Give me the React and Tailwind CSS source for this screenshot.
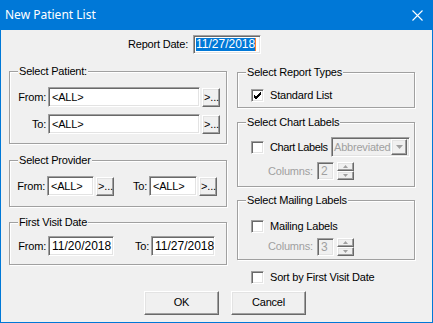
import React from "react";

const sunken =
  "border border-t-[#a0a0a0] border-l-[#a0a0a0] border-b-white border-r-white shadow-[inset_1px_1px_0_#696969,inset_-1px_-1px_0_#e3e3e3]";
const raised =
  "border border-t-white border-l-white border-b-[#696969] border-r-[#696969] shadow-[inset_-1px_-1px_0_#a0a0a0,inset_1px_1px_0_#e3e3e3] bg-[#f0f0f0]";

function Group({ title, className = "", children }) {
  return (
    <div
      className={`relative border border-[#a0a0a0] shadow-[inset_1px_1px_0_#fff,1px_1px_0_#fff] ${className}`}
    >
      <span className="absolute left-[8px] -top-[7px] bg-[#f0f0f0] px-[1px] leading-[13px] whitespace-nowrap">
        {title}
      </span>
      {children}
    </div>
  );
}

function TextBox({ value, className = "", disabled }) {
  return (
    <div
      className={`${sunken} ${disabled ? "bg-[#f0f0f0] text-[#a0a0a0]" : "bg-white"} flex items-center pl-[3px] leading-none whitespace-nowrap overflow-hidden ${className}`}
    >
      {value}
    </div>
  );
}

function Browse({ className = "" }) {
  return (
    <div className={`${raised} flex items-center justify-center w-[18px] h-[19px] leading-none pl-px ${className}`}>
      &gt;...
    </div>
  );
}

function Check({ checked }) {
  return (
    <div className={`${sunken} bg-white w-[13px] h-[13px] shrink-0 flex items-center justify-center`}>
      {checked && (
        <svg width="9" height="9" viewBox="0 0 9 9">
          <path d="M1 4 L3 6 L8 1 M1 5 L3 7 L8 2 M1 6 L3 8 L8 3" stroke="#000" strokeWidth="1" fill="none" />
        </svg>
      )}
    </div>
  );
}

function Spinner({ className = "" }) {
  return (
    <div className={`flex flex-col w-[17px] h-[18px] ${className}`}>
      <div className={`${raised} flex-1 flex items-center justify-center`}>
        <svg width="5" height="3" viewBox="0 0 5 3">
          <path d="M2.5 0 L5 3 L0 3 Z" fill="#a0a0a0" />
        </svg>
      </div>
      <div className={`${raised} flex-1 flex items-center justify-center`}>
        <svg width="5" height="3" viewBox="0 0 5 3">
          <path d="M0 0 L5 0 L2.5 3 Z" fill="#a0a0a0" />
        </svg>
      </div>
    </div>
  );
}

function ColumnsRow({ value, className = "" }) {
  return (
    <div className={`flex items-center pl-[30px] ${className}`}>
      <span className="w-[47px] text-[#a0a0a0]">Columns:</span>
      <TextBox value={value} disabled className="ml-[2px] w-[17px] h-[18px] pl-[2px] text-[12px]" />
      <Spinner className="ml-[3px]" />
    </div>
  );
}

export default function App() {
  return (
    <div
      className="w-[433px] h-[323px] flex flex-col bg-[#0078d7] text-[11px] tracking-[-0.2px] text-black"
      style={{ fontFamily: '"Liberation Sans", Arial, sans-serif' }}
    >
      {/* title bar */}
      <div className="h-[30px] shrink-0 flex items-center justify-between pl-[5px] pr-[10px] text-white">
        <span className="text-[12px] tracking-normal" style={{ fontFamily: '"Noto Sans", sans-serif' }}>
          New Patient List
        </span>
        <svg width="11" height="11" viewBox="0 0 11 11">
          <path d="M0.5 0.5 L10.5 10.5 M10.5 0.5 L0.5 10.5" stroke="#fff" strokeWidth="1.1" />
        </svg>
      </div>

      {/* body */}
      <div className="flex-1 mx-px mb-px bg-[#f0f0f0] flex flex-col">
        <div className="mt-[5px] flex items-center">
          <span className="w-[189px] text-right pr-[2px]">Report Date:</span>
          <div className={`${sunken} bg-white ml-[3px] w-[68px] h-[19px] flex items-center pl-[2px]`}>
            <span className="bg-[#0078d7] text-white leading-[13px] text-[12px] tracking-normal">11/27/2018</span>
            <span className="w-px h-[13px] bg-[#ff7f27]" />
          </div>
        </div>

        <div className="mt-[17px] flex pl-[8px]">
          {/* left column */}
          <div className="w-[218px] flex flex-col">
            <Group title="Select Patient:" className="h-[73px] pt-[15px] flex flex-col gap-[7px]">
              <div className="flex items-center">
                <span className="w-[36px] text-right">From:</span>
                <TextBox value="<ALL>" className="ml-[2px] w-[152px] h-[20px]" />
                <Browse className="ml-[2px]" />
              </div>
              <div className="flex items-center">
                <span className="w-[36px] text-right">To:</span>
                <TextBox value="<ALL>" className="ml-[2px] w-[152px] h-[20px]" />
                <Browse className="ml-[2px]" />
              </div>
            </Group>

            <Group title="Select Provider" className="mt-[16px] h-[47px] pt-[15px]">
              <div className="flex items-center">
                <span className="w-[35px] text-right">From:</span>
                <TextBox value="<ALL>" className="ml-[2px] w-[47px] h-[20px]" />
                <Browse className="ml-[2px]" />
                <span className="w-[33px] text-right">To:</span>
                <TextBox value="<ALL>" className="ml-[2px] w-[48px] h-[20px]" />
                <Browse className="ml-[2px]" />
              </div>
            </Group>

            <Group title="First Visit Date" className="mt-[15px] h-[43px] pt-[13px]">
              <div className="flex items-center">
                <span className="w-[36px] text-right">From:</span>
                <TextBox value="11/20/2018" className="ml-[2px] w-[66px] h-[20px] text-[12px] tracking-normal" />
                <span className="w-[35px] text-right">To:</span>
                <TextBox value="11/27/2018" className="ml-[2px] w-[64px] h-[20px] text-[12px] tracking-normal" />
              </div>
            </Group>
          </div>

          {/* right column */}
          <div className="ml-[10px] mt-px w-[178px] flex flex-col">
            <Group title="Select Report Types" className="h-[36px] pt-[14px] pl-[13px]">
              <div className="flex items-center">
                <Check checked />
                <span className="ml-[6px]">Standard List</span>
              </div>
            </Group>

            <Group title="Select Chart Labels" className="mt-[14px] h-[65px] pt-[14px]">
              <div className="flex items-center pl-[13px] h-[20px]">
                <Check />
                <span className="ml-[6px] w-[61px] whitespace-nowrap tracking-[-0.4px]">Chart Labels</span>
                <div className={`${sunken} bg-[#f0f0f0] w-[79px] h-[20px] flex items-center`}>
                  <span className="flex-1 pl-[2px] text-[#a0a0a0] leading-none whitespace-nowrap overflow-hidden">
                    Abbreviated
                  </span>
                  <div className={`${raised} w-[16px] h-[16px] mr-[2px] flex items-center justify-center`}>
                    <svg width="7" height="4" viewBox="0 0 7 4">
                      <path d="M0 0 L7 0 L3.5 4 Z" fill="#a0a0a0" />
                    </svg>
                  </div>
                </div>
              </div>
              <ColumnsRow value="2" className="mt-[5px]" />
            </Group>

            <Group title="Select Mailing Labels" className="mt-[13px] h-[60px] pt-[17px]">
              <div className="flex items-center pl-[13px]">
                <Check />
                <span className="ml-[6px]">Mailing Labels</span>
              </div>
              <ColumnsRow value="3" className="mt-[3px]" />
            </Group>

            <div className="mt-[9px] pl-[14px] flex items-center">
              <Check />
              <span className="ml-[6px]">Sort by First Visit Date</span>
            </div>
          </div>
        </div>

        <div className="mt-[5px] flex pl-[143px]">
          <div className={`${raised} w-[75px] h-[24px] flex items-center justify-center`}>
            OK
          </div>
          <div className={`${raised} ml-[12px] w-[75px] h-[24px] flex items-center justify-center`}>
            Cancel
          </div>
        </div>
      </div>
    </div>
  );
}
